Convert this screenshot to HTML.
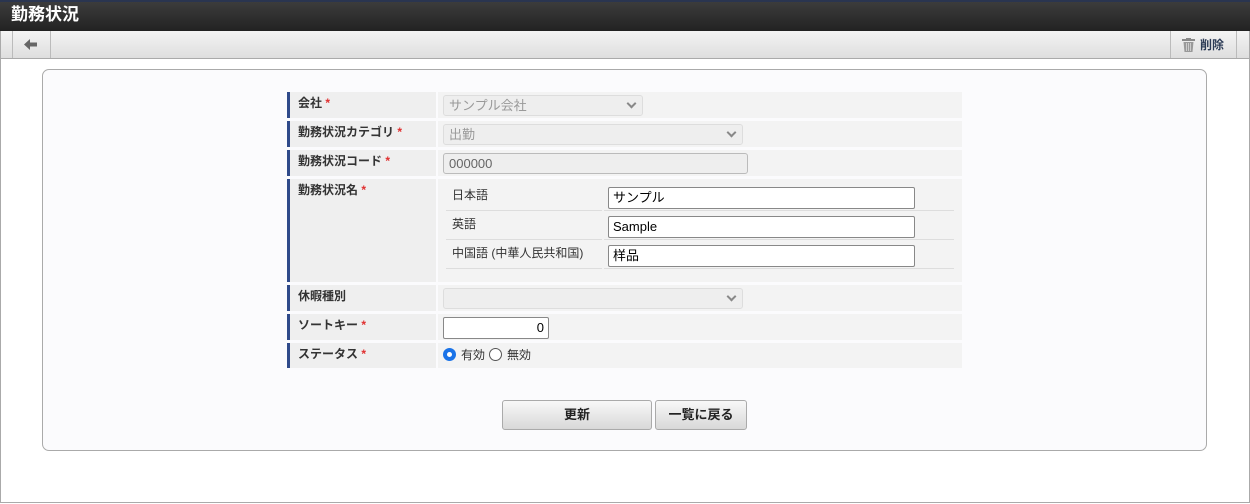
<!DOCTYPE html>
<html><head><meta charset="utf-8"><style>
*{box-sizing:border-box;margin:0;padding:0}
body{width:1250px;height:504px;background:#fff;font-family:"Liberation Sans","Noto Sans CJK JP",sans-serif;font-size:12px;color:#333;position:relative;overflow:hidden}
.a{position:absolute}
.frame{left:0;top:0;width:1250px;height:503px;border:1px solid #aaa;border-top:none}
.title{left:0;top:0;width:1250px;height:31px;background:linear-gradient(#3c3c3c,#222);border-top:2px solid #2a3550;color:#fff;font-weight:bold;font-size:17px;line-height:26px;padding:0 11px}
.tool{left:1px;top:31px;width:1248px;height:28px;background:linear-gradient(#f4f4f4,#dedede);border-bottom:1px solid #aaa}
.vl{width:1px;height:27px;background:#bbb;top:31px}
.panel{left:42px;top:69px;width:1165px;height:382px;border:1px solid #aaa;border-radius:7px;background:#fbfbfd}
.lab{left:287px;width:149px;background:#efefef;border-left:3px solid #2f4a8a;font-weight:bold;font-size:12px;line-height:16px;padding:3px 8px;color:#333}
.val{left:438px;width:524px;background:#f3f3f3}
.st{color:#e03030}
.sel{background:#eee;border:1px solid #ddd;border-radius:3px;color:#999;font-size:13px;line-height:17px;padding:1px 5px}
.chev{position:absolute;right:7px;top:4px;width:7px;height:7px;border-right:2px solid #888;border-bottom:2px solid #888;transform:rotate(45deg)}
.inp{background:#fff;border:1px solid #888;border-radius:2px;font-size:13px;line-height:18px;color:#000;padding:1px 4px}
.sl{left:446px;width:156px;height:29px;border-bottom:1px solid #ddd;padding:5px 6px;line-height:16px;font-size:12px}
.sv{left:604px;width:350px;height:29px;border-bottom:1px solid #ddd}
.btn{border:1px solid #aaa;border-radius:3px;background:linear-gradient(#f8f8f8,#d8d8d8);font-weight:bold;font-size:13px;text-align:center;line-height:28px;color:#222}
.rad{width:13px;height:13px;border-radius:50%;border:1px solid #555;background:#fff}
</style></head><body>
<div class="a frame"></div>
<div class="a title">勤務状況</div>
<div class="a tool"></div>
<div class="a vl" style="left:12px"></div><div class="a vl" style="left:50px"></div>
<svg class="a" style="left:24px;top:39px" width="14" height="11"><path d="M0 5.5L6 0V3.5H13V7.5H6V11Z" fill="#666"/></svg>
<div class="a vl" style="left:1170px"></div><div class="a vl" style="left:1236px"></div>
<svg class="a" style="left:1182px;top:38px" width="13" height="14"><rect x="0" y="1" width="13" height="2" fill="#888"/><rect x="4" y="0" width="5" height="2" fill="#888"/><path d="M1.5 4H11.5L10.5 14H2.5Z" fill="#999"/><path d="M4.5 5V13M6.5 5V13M8.5 5V13" stroke="#ccc"/></svg>
<div class="a" style="left:1200px;top:37px;font-weight:bold;color:#2b3a55;font-size:12px;line-height:16px">削除</div>
<div class="a panel"></div>

<div class="a lab" style="top:92px;height:26px">会社 <span class="st">*</span></div>
<div class="a val" style="top:92px;height:26px"></div>
<div class="a sel" style="left:443px;top:95px;width:200px;height:21px">サンプル会社<span class="chev"></span></div>

<div class="a lab" style="top:121px;height:26px">勤務状況カテゴリ <span class="st">*</span></div>
<div class="a val" style="top:121px;height:26px"></div>
<div class="a sel" style="left:443px;top:124px;width:300px;height:21px">出勤<span class="chev"></span></div>

<div class="a lab" style="top:150px;height:26px">勤務状況コード <span class="st">*</span></div>
<div class="a val" style="top:150px;height:26px"></div>
<div class="a sel" style="left:443px;top:153px;width:305px;height:21px;border-color:#bbb;color:#666">000000</div>

<div class="a lab" style="top:179px;height:103px">勤務状況名 <span class="st">*</span></div>
<div class="a val" style="top:179px;height:103px"></div>
<div class="a sl" style="top:182px">日本語</div><div class="a sv" style="top:182px"></div>
<div class="a inp" style="left:608px;top:187px;width:307px;height:22px">サンプル</div>
<div class="a sl" style="top:211px">英語</div><div class="a sv" style="top:211px"></div>
<div class="a inp" style="left:608px;top:216px;width:307px;height:22px">Sample</div>
<div class="a sl" style="top:240px">中国語 (中華人民共和国)</div><div class="a sv" style="top:240px"></div>
<div class="a inp" style="left:608px;top:245px;width:307px;height:22px">样品</div>

<div class="a lab" style="top:285px;height:26px">休暇種別</div>
<div class="a val" style="top:285px;height:26px"></div>
<div class="a sel" style="left:443px;top:288px;width:300px;height:21px"><span class="chev"></span></div>

<div class="a lab" style="top:314px;height:26px">ソートキー <span class="st">*</span></div>
<div class="a val" style="top:314px;height:26px"></div>
<div class="a inp" style="left:443px;top:317px;width:106px;height:22px;text-align:right">0</div>

<div class="a lab" style="top:343px;height:25px">ステータス <span class="st">*</span></div>
<div class="a val" style="top:343px;height:25px"></div>
<div class="a rad" style="left:443px;top:348px;border:4px solid #1a73e8"></div>
<div class="a" style="left:461px;top:347px;line-height:16px">有効</div>
<div class="a rad" style="left:489px;top:348px"></div>
<div class="a" style="left:507px;top:347px;line-height:16px">無効</div>

<div class="a btn" style="left:502px;top:400px;width:150px;height:30px">更新</div>
<div class="a btn" style="left:655px;top:400px;width:92px;height:30px">一覧に戻る</div>
</body></html>
